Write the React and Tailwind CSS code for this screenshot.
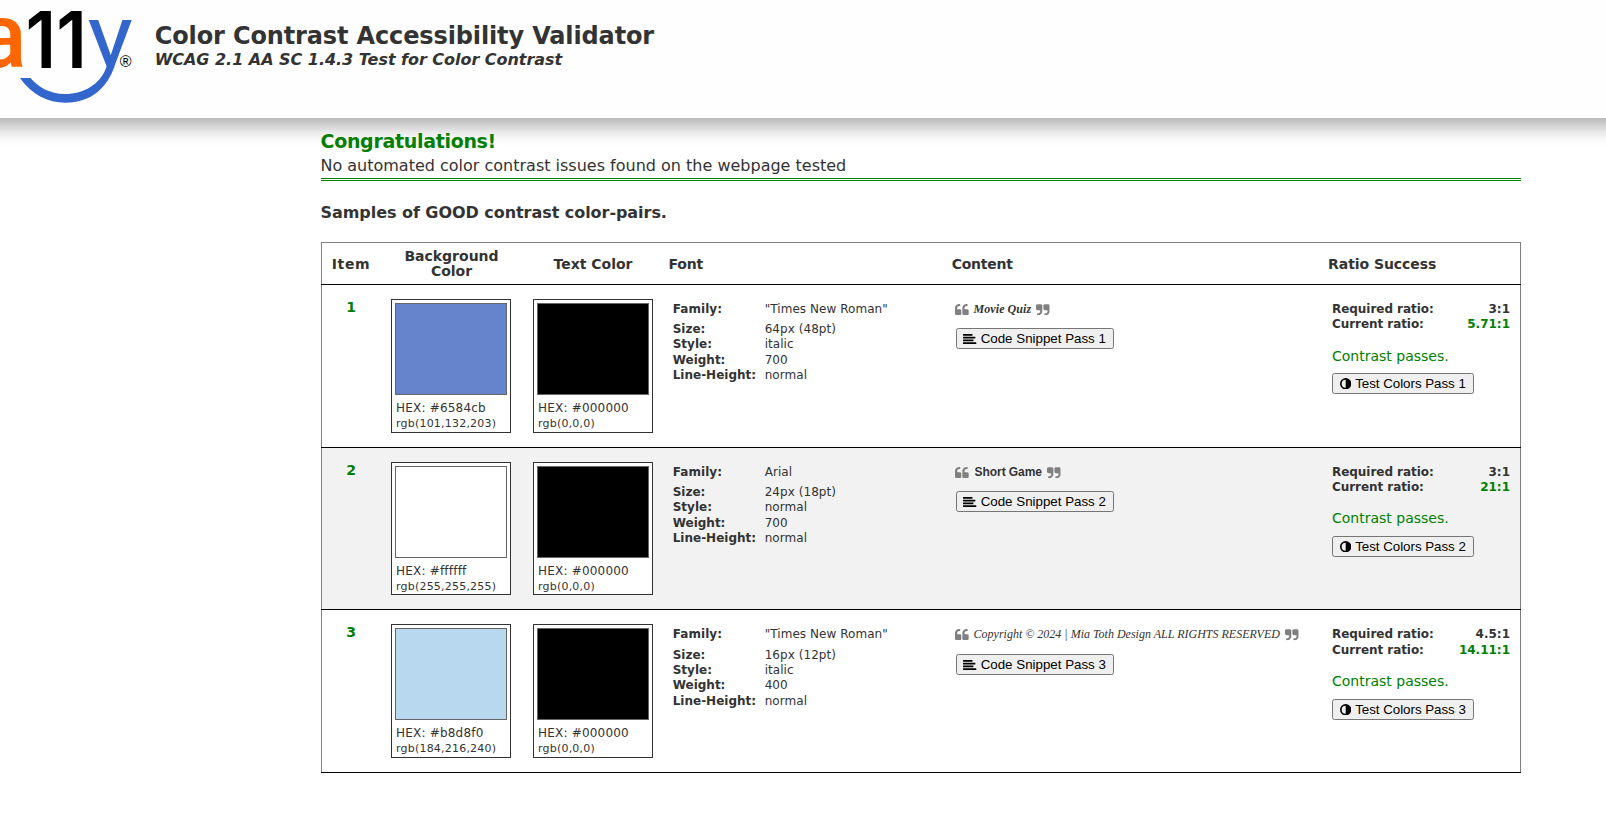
import React from 'react';

const QUOTE =
  'M832 960v384q0 80-56 136t-136 56h-384q-80 0-136-56t-56-136v-704q0-104 40.5-198.5t109.5-163.5 163.5-109.5 198.5-40.5h64q26 0 45 19t19 45v128q0 26-19 45t-45 19h-64q-106 0-181 75t-75 181v32q0 40 28 68t68 28h224q80 0 136 56t56 136zm896 0v384q0 80-56 136t-136 56h-384q-80 0-136-56t-56-136v-704q0-104 40.5-198.5t109.5-163.5 163.5-109.5 198.5-40.5h64q26 0 45 19t19 45v128q0 26-19 45t-45 19h-64q-106 0-181 75t-75 181v32q0 40 28 68t68 28h224q80 0 136 56t56 136z';

function QuoteIcon({ className = '' }) {
  return (
    <svg viewBox="64 128 1664 1408" preserveAspectRatio="none" className={'h-[11.3px] w-[13.7px] shrink-0 fill-[#808080] ' + className}>
      <path d={QUOTE} />
    </svg>
  );
}

function AlignLeftIcon() {
  return (
    <svg viewBox="0 192 1792 1344" className="h-[10px] w-[13.3px] shrink-0 fill-black">
      <rect x="0" y="192" width="1280" height="220" rx="40" />
      <rect x="0" y="566" width="1664" height="220" rx="40" />
      <rect x="0" y="941" width="1408" height="220" rx="40" />
      <rect x="0" y="1316" width="1792" height="220" rx="40" />
    </svg>
  );
}

function AdjustIcon() {
  return (
    <svg viewBox="128 128 1536 1536" className="size-[11.4px] shrink-0 fill-black">
      <path fillRule="evenodd" d="M896 128a768 768 0 1 0 0 1536a768 768 0 1 0 0-1536zM896 352v1088a544 544 0 0 1 0-1088z" />
    </svg>
  );
}

function Logo() {
  return (
    <svg viewBox="0 0 140 110" className="h-[110px] w-[140px] shrink-0">
      <defs>
        <clipPath id="upper">
          <rect x="80" y="0" width="60" height="68" />
        </clipPath>
      </defs>
      <text x="-22" y="67.4" fontSize="90" fontWeight="500" fontFamily="Roboto" fill="#ff6600">a</text>
      <g transform="translate(50.8 67.5) scale(0.93 1)">
        <text x="5.7" y="0" fontSize="78" fontWeight="600" fontFamily="Inter" textAnchor="end" fill="#000">1</text>
      </g>
      <g transform="translate(81.6 67.5) scale(0.93 1)">
        <text x="5.7" y="0" fontSize="78" fontWeight="600" fontFamily="Inter" textAnchor="end" fill="#000">1</text>
      </g>
      <g clipPath="url(#upper)">
        <g transform="translate(88.4 67) scale(1.07 1)">
          <text x="-0.6" y="0" fontSize="89" fontWeight="400" fontFamily="Roboto" fill="#3366cc">y</text>
        </g>
      </g>
      <path
        fill="#3366cc"
        d="M20 78H30.5C38 87 50 94 65 94C84 94 100 84 105.9 68.5L107 66.5H114.5C107.5 86 93 102.7 65 102.7C48 102.7 32 95 20 78Z"
      />
      <text x="119.8" y="67" fontSize="16" fontFamily="Liberation Sans" fill="#000">®</text>
    </svg>
  );
}

function Button({ icon, className, children }) {
  return (
    <button
      className={
        "flex h-[21px] items-center rounded-[2.5px] border border-[#767676] bg-[#efefef] font-['Liberation_Sans',sans-serif] text-[13.333px] leading-[19px] whitespace-nowrap text-black " +
        className
      }
    >
      {icon}
      <span>{children}</span>
    </button>
  );
}

function Swatch({ hex, rgb, fill, height }) {
  return (
    <div className={'w-[120px] border border-[#333] bg-white p-[3px] ' + height}>
      <div className={'h-[92px] border border-[#666] ' + fill} />
      <div className="mt-[6px] h-[15px] pl-[1px] text-[12px] leading-[15px] tracking-[0.2px] whitespace-nowrap">HEX: {hex}</div>
      <div className="h-[15px] pl-[1px] text-[11px] leading-[15px] tracking-[0.21px] whitespace-nowrap">{rgb}</div>
    </div>
  );
}

const ROWS = [
  {
    n: 1, row: 'bg-white', inner: 'h-[162px]', card: 'h-[134px]', fill: 'bg-[#6584cb]', hex: '#6584cb', rgb: 'rgb(101,132,203)',
    family: '"Times New Roman"', size: '64px (48pt)', style: 'italic', weight: '700', famMb: 'mb-[3px]',
    text: 'Movie Quiz', textClass: "font-['Liberation_Serif',serif] font-bold italic tracking-[0.06px]",
    req: '3:1', cur: '5.71:1', gap: 'mt-[10px]', curH: 'h-[15px]', passMt: 'mt-[16px]', testMt: 'mt-[8px]',
  },
  {
    n: 2, row: 'bg-[#f2f2f2]', inner: 'h-[161px]', card: 'h-[133px]', fill: 'bg-white', hex: '#ffffff', rgb: 'rgb(255,255,255)',
    family: 'Arial', size: '24px (18pt)', style: 'normal', weight: '700', famMb: 'mb-[3px]',
    text: 'Short Game', textClass: "pl-[1px] font-['Liberation_Sans',sans-serif] font-bold tracking-[-0.07px]",
    req: '3:1', cur: '21:1', gap: 'mt-[10px]', curH: 'h-[15px]', passMt: 'mt-[15px]', testMt: 'mt-[9px]',
  },
  {
    n: 3, row: 'bg-white', inner: 'h-[162px]', card: 'h-[134px]', fill: 'bg-[#b8d8f0]', hex: '#b8d8f0', rgb: 'rgb(184,216,240)',
    family: '"Times New Roman"', size: '16px (12pt)', style: 'italic', weight: '400', famMb: 'mb-[3.7px]',
    text: 'Copyright © 2024 | Mia Toth Design ALL RIGHTS RESERVED', textClass: "font-['Liberation_Serif',serif] italic",
    req: '4.5:1', cur: '14.11:1', gap: 'mt-[11px]', curH: 'mt-px h-[15px]', passMt: 'mt-[15px]', testMt: 'mt-[9px]',
  },
];

const COLS = 'grid grid-cols-[58px_142px_142px_283px_376px_1fr] border-x border-[#808080]';

function FontLine({ label, children, className = 'h-[15.33px] leading-[15.33px]', labelClass = '' }) {
  return (
    <div className={'flex text-[12px] whitespace-nowrap ' + className}>
      <dt className={'w-[92px] font-bold ' + labelClass}>{label}</dt>
      <dd className="tracking-[0.05px]">{children}</dd>
    </div>
  );
}

function Row({ r }) {
  return (
    <div className={'border-b border-black ' + r.row}>
      <div className={COLS + ' ' + r.inner}>
        <div className="pt-[15px] text-center text-[14px] leading-[15px] font-bold text-[#008000]">{r.n}</div>
        <div className="pt-[14px] pl-[11px]">
          <Swatch hex={r.hex} rgb={r.rgb} fill={r.fill} height={r.card} />
        </div>
        <div className="pt-[14px] pl-[11px]">
          <Swatch hex="#000000" rgb="rgb(0,0,0)" fill="bg-black" height={r.card} />
        </div>
        <dl className="pt-[14px] pl-[8.7px]">
          <FontLine label="Family:" className={'h-[20px] leading-[20px] ' + r.famMb} labelClass="tracking-[0.06px]">{r.family}</FontLine>
          <FontLine label="Size:">{r.size}</FontLine>
          <FontLine label="Style:">{r.style}</FontLine>
          <FontLine label="Weight:">{r.weight}</FontLine>
          <FontLine label="Line-Height:">normal</FontLine>
        </dl>
        <div className="pt-[16px] pl-[8.3px]">
          <div className="flex h-[17px] items-center gap-[4.6px] text-[12px] leading-[17px] whitespace-nowrap">
            <QuoteIcon />
            <span className={r.textClass}>{r.text}</span>
            <QuoteIcon className="rotate-180" />
          </div>
          <Button className={'ml-[0.7px] w-[158px] gap-[3.9px] pl-[6.5px] ' + r.gap} icon={<AlignLeftIcon />}>
            Code Snippet Pass {r.n}
          </Button>
        </div>
        <div className="pt-[17px] pr-[10px] pl-[9px]">
          <div className="flex h-[15px] justify-between text-[12px] leading-[15px] font-bold">
            <span className="tracking-[-0.04px]">Required ratio:</span>
            <span>{r.req}</span>
          </div>
          <div className={'flex justify-between text-[12px] leading-[15px] font-bold ' + r.curH}>
            <span className="tracking-[-0.06px]">Current ratio:</span>
            <span className="text-[#008000]">{r.cur}</span>
          </div>
          <div className={'h-[17px] text-[14px] leading-[17px] text-[#008000] ' + r.passMt}>Contrast passes.</div>
          <Button className={'w-[142px] gap-[3.8px] pl-[7px] tracking-[-0.03px] ' + r.testMt} icon={<AdjustIcon />}>
            Test Colors Pass {r.n}
          </Button>
        </div>
      </div>
    </div>
  );
}

export default function App() {
  return (
    <div className="h-[815px] w-full overflow-hidden bg-white font-['DejaVu_Sans',Verdana,sans-serif] text-[#333]">
      <header className="flex h-[118px] bg-[#fefefe] shadow-[0_-22px_18px_30px_#a9a9a9]">
        <Logo />
        <div className="pt-[22px] pl-[14.7px] whitespace-nowrap">
          <h1 className="text-[24px] leading-[28px] font-bold tracking-[-0.13px]">Color Contrast Accessibility Validator</h1>
          <p className="text-[16px] leading-[19px] font-bold tracking-[-0.03px] italic">WCAG 2.1 AA SC 1.4.3 Test for Color Contrast</p>
        </div>
      </header>
      <main className="ml-[321px] w-[1200px]">
        <div className="pt-[11px]">
          <h2 className="-ml-[0.5px] h-[24px] text-[19px] leading-[24px] font-bold tracking-[-0.31px] text-[#008000]">Congratulations!</h2>
          <p className="mt-[2px] -ml-[0.6px] h-[21px] text-[16px] leading-[21px]">No automated color contrast issues found on the webpage tested</p>
          <div className="mt-[2px] h-[3px] border-y border-[#008000]" />
        </div>
        <h3 className="mt-[21px] -ml-[0.5px] h-[21px] text-[16px] leading-[21px] font-bold tracking-[-0.05px]">
          Samples of GOOD contrast color-pairs.
        </h3>
        <section className="mt-[19px] border-t border-[#808080]">
          <div className="border-b border-black">
            <div className={COLS + ' h-[41px] items-center pt-px text-[14px] leading-[15px] font-bold'}>
              <div className="text-center tracking-[0.6px]">Item</div>
              <div className="pr-5 pl-[21px] text-center">Background Color</div>
              <div className="text-center">Text Color</div>
              <div className="pl-[4.5px] tracking-[-0.2px]">Font</div>
              <div className="pl-[4.7px] tracking-[-0.25px]">Content</div>
              <div className="pl-[5px] tracking-[-0.05px]">Ratio Success</div>
            </div>
          </div>
          {ROWS.map((r) => (
            <Row key={r.n} r={r} />
          ))}
        </section>
      </main>
    </div>
  );
}
